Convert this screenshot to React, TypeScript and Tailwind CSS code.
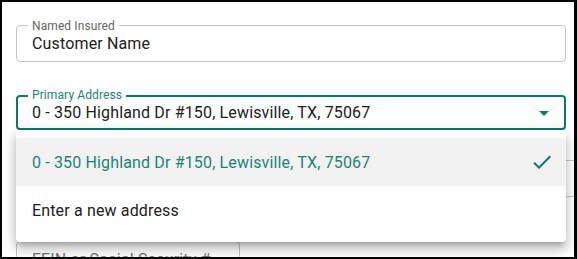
import React from "react";

const font = { fontFamily: "Roboto, 'Liberation Sans', sans-serif" };

export default function App() {
  return (
    <div
      className="w-[577px] h-[259px] box-border border-solid border-black border-t-2 border-l-2 border-r-[3px] border-b-2 overflow-hidden bg-white"
      style={font}
    >
      <div className="relative flex flex-col pl-[14px] pt-[23px] w-[700px]">
        {/* Named Insured */}
        <div className="relative w-[550px] h-[37px] box-border border border-[#c4c4c4] rounded-[4px] flex items-center pl-[15px]">
          <span className="absolute left-[11px] top-[-7px] px-[4px] bg-white text-[12px] leading-[14px] tracking-[0.1px] text-[#666666]">
            Named Insured
          </span>
          <span className="text-[16px] leading-[19px] tracking-[0.15px] text-[#212121]">Customer Name</span>
        </div>

        {/* Primary Address */}
        <div className="relative mt-[33px] w-[550px] h-[35px] box-border border-2 border-[#0b7a6a] rounded-[4px] flex items-center pl-[14px]">
          <span className="absolute left-[10px] top-[-9px] px-[4px] bg-white text-[12px] leading-[14px] tracking-[0.1px] text-[#1b8575]">
            Primary Address
          </span>
          <span className="text-[16px] leading-[19px] tracking-[0.15px] text-[#212121]">
            0 - 350 Highland Dr #150, Lewisville, TX, 75067
          </span>
          <svg
            className="absolute right-[8px] top-[4px]"
            width="24"
            height="24"
            viewBox="0 0 24 24"
          >
            <path d="M7 10l5 5 5-5z" fill="#0b7a6a" />
          </svg>

          {/* Menu */}
          <div className="absolute left-[-2px] top-[calc(100%+2px)] w-[550px] bg-white rounded-[4px] py-2 z-10 shadow-[0px_5px_5px_-3px_rgba(0,0,0,0.2),0px_8px_10px_1px_rgba(0,0,0,0.14),0px_3px_14px_2px_rgba(0,0,0,0.12)]">
            <div className="h-[48px] bg-[#f2f2f2] flex items-center justify-between pl-[16px] pr-[12px]">
              <span className="text-[16px] leading-[19px] tracking-[0.15px] text-[#1b8575]">
                0 - 350 Highland Dr #150, Lewisville, TX, 75067
              </span>
              <svg width="24" height="24" viewBox="0 0 24 24">
                <path d="M9 16.17L4.83 12l-1.42 1.41L9 19 21 7l-1.41-1.41z" fill="#0b7a6a" />
              </svg>
            </div>
            <div className="h-[48px] flex items-center pl-[16px]">
              <span className="text-[16px] leading-[19px] tracking-[0.15px] text-[#212121]">Enter a new address</span>
            </div>
          </div>
        </div>

        {/* Row 3 (under menu) */}
        <div className="mt-[30px] flex gap-[11px]">
          <div className="w-[480px] h-[37px] box-border border border-[#c4c4c4] rounded-[4px]" />
          <div className="w-[400px] h-[37px] box-border border border-[#c4c4c4] rounded-[4px] flex items-center pl-[13px]">
            <span className="text-[16px] leading-[19px] tracking-[0.15px] text-[#757575] whitespace-nowrap">
              Business Description
            </span>
          </div>
        </div>

        {/* Row 4 */}
        <div className="mt-[44px] flex">
          <div className="w-[224px] h-[37px] box-border border border-[#c4c4c4] rounded-[4px] flex items-center pl-[15px]">
            <span className="text-[16px] leading-[19px] tracking-[0.15px] text-[#757575] whitespace-nowrap">
              FEIN or Social Security #
            </span>
          </div>
        </div>
      </div>
    </div>
  );
}
